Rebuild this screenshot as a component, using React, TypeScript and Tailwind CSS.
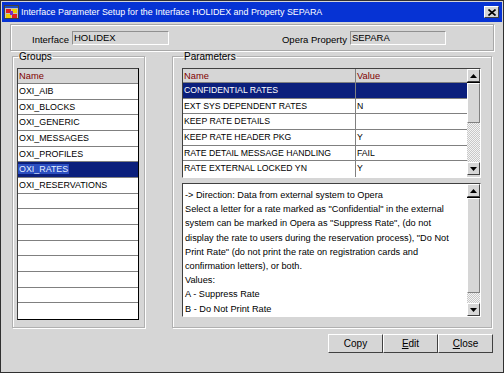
import React from 'react'

const groups = [
  'OXI_AIB',
  'OXI_BLOCKS',
  'OXI_GENERIC',
  'OXI_MESSAGES',
  'OXI_PROFILES',
  'OXI_RATES',
  'OXI_RESERVATIONS',
  '', '', '', '', '', '', '', '',
]

const params = [
  { name: 'CONFIDENTIAL RATES', value: '' },
  { name: 'EXT SYS DEPENDENT RATES', value: 'N' },
  { name: 'KEEP RATE DETAILS', value: '' },
  { name: 'KEEP RATE HEADER PKG', value: 'Y' },
  { name: 'RATE DETAIL MESSAGE HANDLING', value: 'FAIL' },
  { name: 'RATE EXTERNAL LOCKED YN', value: 'Y' },
]

const descLines = [
  '-> Direction: Data from external system to Opera',
  'Select a letter for a rate marked as "Confidential" in the external',
  'system can be marked in Opera as "Suppress Rate", (do not',
  'display the rate to users during the reservation process), "Do Not',
  'Print Rate" (do not print the rate on registration cards and',
  'confirmation letters), or both.',
  'Values:',
  'A - Suppress Rate',
  'B - Do Not Print Rate',
]

function Arrow({ up }: { up?: boolean }) {
  return (
    <div className="w-[13px] h-[13px] bg-[#d6d6d6] border border-t-white border-l-white border-r-[#404040] border-b-[#404040] flex items-center justify-center">
      <svg width="7" height="4" viewBox="0 0 7 4">
        {up ? <polygon points="3.5,0 7,4 0,4" fill="#000" /> : <polygon points="0,0 7,0 3.5,4" fill="#000" />}
      </svg>
    </div>
  )
}

function Scrollbar({ thumb, track }: { thumb: number; track: number }) {
  return (
    <div className="w-[13px] flex flex-col">
      <Arrow up />
      <div className="h-[1px] bg-black" />
      <div className="bg-[#d6d6d6] border border-t-white border-l-white border-r-[#808080] border-b-[#808080]" style={{ height: thumb }} />
      <div
        className="bg-[repeating-conic-gradient(#c8c8c8_0_25%,#f4f4f4_0_50%)] bg-[length:2px_2px]"
        style={{ height: track }}
      />
      <Arrow />
    </div>
  )
}

function Button({ label, u }: { label: string; u?: number }) {
  return (
    <button className="w-[55px] h-[19px] bg-[#d6d6d6] border border-t-white border-l-white border-r-[#404040] border-b-[#404040] text-[10px] text-black flex items-center justify-center">
      {u === undefined ? (
        <span>{label}</span>
      ) : (
        <span>
          <span className="underline">{label[u]}</span>
          {label.slice(u + 1)}
        </span>
      )}
    </button>
  )
}

export default function App() {
  return (
    <div className="w-[504px] h-[373px] bg-[#d6d6d6] border border-[#303030] flex flex-col font-['Liberation_Sans',Arial,sans-serif] text-[9px] text-black overflow-hidden">
      {/* Title bar */}
      <div className="h-[20px] mx-[1px] mt-[1px] bg-[#0633d4] flex items-center pl-[2px] pr-[3px]">
        <svg width="15" height="14" viewBox="0 0 15 14" className="shrink-0">
          <rect x="0.5" y="0.5" width="14" height="13" fill="#c0c0c0" stroke="#404040" />
          <rect x="1" y="1" width="13" height="2" fill="#1a4bc8" />
          <rect x="2" y="4" width="5" height="4" fill="#e02020" />
          <rect x="8" y="4" width="5" height="4" fill="#f0d000" />
          <rect x="2" y="9" width="5" height="4" fill="#f0d000" />
          <rect x="8" y="9" width="5" height="4" fill="#e02020" />
          <rect x="6" y="6" width="3" height="4" fill="#7b2fbf" />
        </svg>
        <span className="ml-[2px] text-white text-[8.9px] leading-none whitespace-nowrap">
          Interface Parameter Setup for the Interface HOLIDEX and Property SEPARA
        </span>
        <div className="ml-auto w-[15px] h-[12px] bg-[#d6d6d6] border border-t-white border-l-white border-r-[#404040] border-b-[#404040] flex items-center justify-center">
          <svg width="8" height="7" viewBox="0 0 8 7">
            <path d="M0.5 0.5 L7.5 6.5 M7.5 0.5 L0.5 6.5" stroke="#000" strokeWidth="1.6" />
          </svg>
        </div>
      </div>

      <div className="flex flex-col px-[9px] pt-[2px]">
        {/* Header panel */}
        <div className="h-[27px] border border-[#a8a8a8] shadow-[inset_1px_1px_0_#fff,1px_1px_0_#fff] flex items-center">
          <span className="ml-[21px] mt-[5px] text-[9.5px]">Interface</span>
          <div className="ml-[3px] w-[97px] h-[14px] border border-[#909090] border-r-white border-b-white bg-[#d6d6d6] text-[9.5px] leading-[11px] pl-[1px]">
            HOLIDEX
          </div>
          <span className="ml-[113px] mt-[5px] text-[9.5px]">Opera Property</span>
          <div className="ml-[3px] w-[96px] h-[14px] border border-[#909090] border-r-white border-b-white bg-[#d6d6d6] text-[9.5px] leading-[11px] pl-[1px]">
            SEPARA
          </div>
        </div>

        <div className="flex">
          {/* Groups */}
          <fieldset className="ml-[2px] w-[133px] h-[277px] border border-[#b0b0b0] shadow-[inset_1px_1px_0_#fff,1px_1px_0_#fff] pl-[4px] pt-[6px] m-0">
            <legend className="ml-[1px] px-[1px] text-[10px] leading-[11px]">Groups</legend>
            <div className="w-[122px] border border-t-[#404040] border-l-[#404040] border-r-black border-b-black bg-white">
              <div className="h-[15px] bg-[#d6d6d6] border-b border-[#808080] pl-[1px] text-[#800000] text-[9.3px] leading-[14px]">
                Name
              </div>
              {groups.map((g, i) => (
                <div
                  key={i}
                  className={
                    'h-[15.67px] border-b border-[#808080] last:border-b-0 leading-[15px] whitespace-nowrap text-[8.9px] ' +
                    (g === 'OXI_RATES' ? 'bg-[#0b1f7c]' : '')
                  }
                >
                  {g === 'OXI_RATES' ? (
                    <span className="bg-[#2a4dc0] text-[#e6f0ff] pl-[1px] pr-[1px]">{g}</span>
                  ) : (
                    <span className="pl-[1px]">{g}</span>
                  )}
                </div>
              ))}
            </div>
          </fieldset>

          {/* Parameters */}
          <fieldset className="ml-[27px] w-[320px] h-[277px] border border-[#b0b0b0] shadow-[inset_1px_1px_0_#fff,1px_1px_0_#fff] pl-[9px] pt-[6px] m-0">
            <legend className="ml-[1px] px-[1px] text-[10px] leading-[11px]">Parameters</legend>
            <div className="w-[299px] h-[110px] border border-t-[#404040] border-l-[#404040] border-r-white border-b-white flex">
              <div className="flex-1 bg-white">
                <div className="flex h-[14px] bg-[#d6d6d6] border-b border-[#808080] text-[#800000] text-[9.3px] leading-[14px]">
                  <div className="w-[173px] border-r border-[#808080] pl-[1px]">Name</div>
                  <div className="flex-1 pl-[1px]">Value</div>
                </div>
                {params.map((p, i) => (
                  <div
                    key={p.name}
                    className={
                      'flex h-[15.67px] border-b border-[#808080] last:border-b-0 leading-[15px] text-[8.7px] whitespace-nowrap ' +
                      (i === 0 ? 'bg-[#0b1f7c] text-white' : '')
                    }
                  >
                    <div className="w-[173px] border-r border-[#808080] pl-[1px]">{p.name}</div>
                    <div className="flex-1 pl-[1px]">{p.value}</div>
                  </div>
                ))}
              </div>
              <Scrollbar thumb={40} track={39} />
            </div>

            <div className="mt-[5px] w-[299px] h-[134px] border border-t-[#404040] border-l-[#404040] border-r-white border-b-white flex">
              <div className="flex-1 bg-white pl-[2px] pt-[4px] text-[9.2px] leading-[14.2px] whitespace-nowrap">
                {descLines.map((l) => (
                  <div key={l}>{l}</div>
                ))}
              </div>
              <Scrollbar thumb={95} track={10} />
            </div>
          </fieldset>
        </div>

        {/* Buttons */}
        <div className="flex justify-end mt-[6px] mr-[1px]">
          <Button label="Copy" />
          <Button label="Edit" u={0} />
          <Button label="Close" u={0} />
        </div>
      </div>
    </div>
  )
}
